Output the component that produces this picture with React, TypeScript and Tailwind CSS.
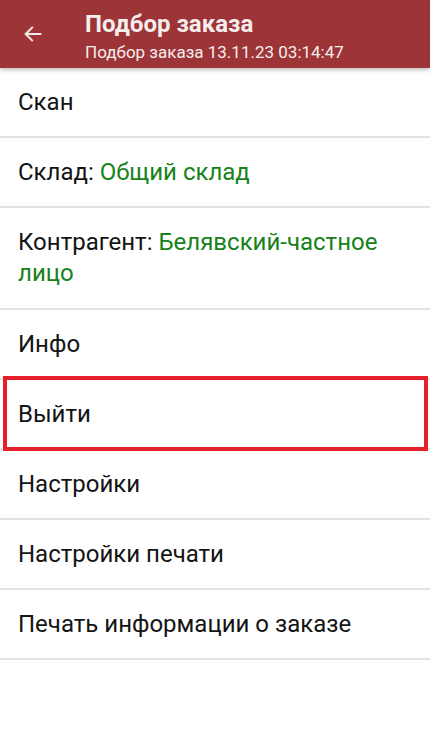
import React from "react";

function Row({ children, h = "h-[70px]" }: { children: React.ReactNode; h?: string }) {
  return (
    <div className={`${h} flex items-center px-[18px] border-b-2 border-[#e3e3e3]`}>
      <div className="text-[24px] leading-[31px] text-[#141414]">{children}</div>
    </div>
  );
}

export default function App() {
  return (
    <div className="w-[430px] h-[740px] bg-white overflow-hidden" style={{ fontFamily: "Roboto, 'Noto Sans', sans-serif" }}>
      <div className="relative z-10 h-[68px] bg-[#9d3437] flex items-center shadow-[0_2px_4px_rgba(0,0,0,0.25)]">
        <div className="w-[85px] flex items-center pl-[22px]">
          <svg width="22" height="22" viewBox="0 0 24 24" fill="none">
            <path d="M20 12H4.5M11 5l-7 7 7 7" stroke="#f4e9e9" strokeWidth="2.2" strokeLinecap="square" />
          </svg>
        </div>
        <div className="flex flex-col text-[#f6eded] pt-[4px]">
          <div className="text-[24px] font-bold leading-[30px]">Подбор заказа</div>
          <div className="text-[17px] leading-[22px] mt-[2px]">Подбор заказа 13.11.23 03:14:47</div>
        </div>
      </div>
      <Row>Скан</Row>
      <Row>
        Склад: <span className="text-[#17821a]">Общий склад</span>
      </Row>
      <Row h="h-[102px]">
        <span>Контрагент: </span>
        <span className="text-[#17821a]">Белявский-частное лицо</span>
      </Row>
      <Row>Инфо</Row>
      <div className="relative">
        <Row>Выйти</Row>
        <div className="absolute left-[3px] right-[2px] -top-[4px] bottom-[-1px] border-4 border-[#e6202b]" />
      </div>
      <Row>Настройки</Row>
      <Row>Настройки печати</Row>
      <Row>Печать информации о заказе</Row>
    </div>
  );
}
